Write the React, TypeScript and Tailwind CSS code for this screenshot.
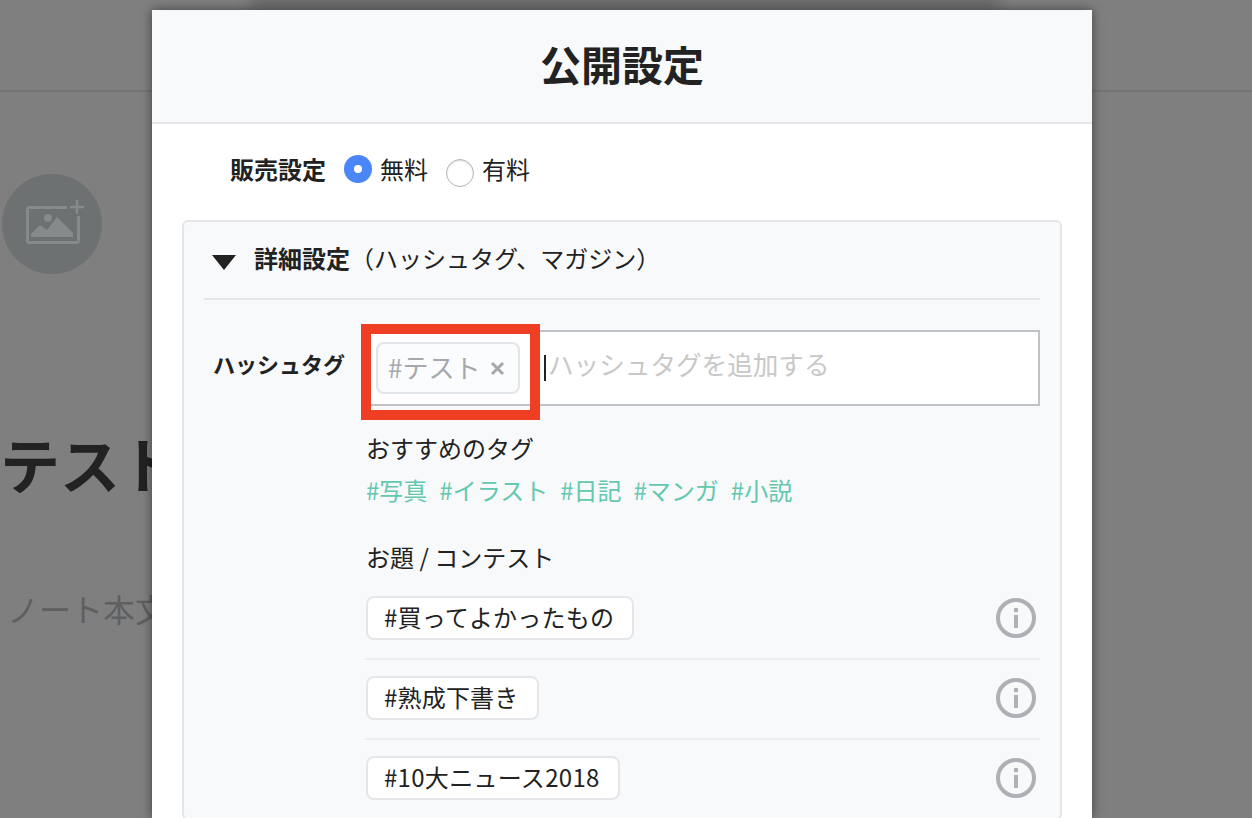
import React from "react";

const font = { fontFamily: '"Noto Sans CJK JP", "Noto Sans", sans-serif' };

function Info() {
  return (
    <svg width="40" height="40" viewBox="0 0 40 40" className="shrink-0 mr-[4px]">
      <circle cx="20" cy="20" r="18" fill="none" stroke="#adb0b4" strokeWidth="4" />
      <rect x="18" y="10" width="4" height="4" fill="#adb0b4" />
      <rect x="18" y="17" width="4" height="13" fill="#adb0b4" />
    </svg>
  );
}

function ContestRow({ label, last, track }: { label: string; last?: boolean; track: string }) {
  return (
    <div className={`flex items-center justify-between h-[80px] pb-[2px] border-b-2 ${last ? "border-transparent" : "border-[#ebedef]"}`}>
      <span className={`ml-[1px] flex items-center h-[44px] pl-[16px] pr-[18px] pb-[3px] bg-white border-2 border-[#e4e6e9] rounded-[8px] text-[24px] text-[#222] ${track}`}>
        {label}
      </span>
      <Info />
    </div>
  );
}

export default function App() {
  return (
    <div style={font} className="relative w-[1252px] h-[818px] overflow-hidden bg-[#7f7f7f]">
      <div className="flex flex-col h-[92px] border-b-2 border-[#747474]">
        <div className="ml-[250px] w-[750px] h-[4px] -mt-[4px] bg-[#555] shadow-[0_4px_14px_rgba(0,0,0,0.6)]" />
      </div>
      <div className="pt-[82px] pl-[2px]">
        <div className="flex items-center justify-center w-[100px] h-[100px] rounded-full bg-[#6d7172]">
          <svg width="58" height="44" viewBox="0 0 58 44" fill="none" className="ml-[6px] mb-[4px]">
            <path d="M41 7.5H3.5a2 2 0 0 0-2 2v31a2 2 0 0 0 2 2h47a2 2 0 0 0 2-2V16" stroke="#868a8a" strokeWidth="3" />
            <circle cx="22" cy="18" r="4" fill="#868a8a" />
            <path d="M5 37v-3l9-9 7 5 10-13 16 16v4z" fill="#868a8a" />
            <path d="M51 0v14M44 7h14" stroke="#868a8a" strokeWidth="2.5" />
          </svg>
        </div>
        <div className="mt-[147px] -ml-[2px] text-[60px] leading-[84px] font-bold text-[#222] whitespace-nowrap">テスト</div>
        <div className="mt-[81px] ml-[5px] text-[32px] leading-[44px] text-[#5f5f5f] whitespace-nowrap">ノート本文</div>
      </div>

      <div className="absolute left-[152px] top-[10px] w-[940px] h-[808px] bg-white overflow-hidden shadow-[0_0_10px_rgba(0,0,0,0.5)]">
        <div className="h-[114px] flex items-center justify-center bg-[#f7f9fb] border-b-2 border-[#e4e6e9] pb-[6px]">
          <h1 className="text-[41px] font-bold text-[#222] leading-none">公開設定</h1>
        </div>
        <div className="flex items-center h-[96px] pl-[78px] pb-[6px] text-[24px] text-[#222]">
          <span className="font-bold w-[114px]">販売設定</span>
          <span className="w-[28px] h-[28px] rounded-full bg-[#4a86f7] flex items-center justify-center">
            <span className="w-[8px] h-[8px] rounded-full bg-white" />
          </span>
          <span className="ml-[8px]">無料</span>
          <span className="ml-[18px] mt-[8px] w-[28px] h-[28px] rounded-full bg-white border border-[#b5b5b5] shadow-[inset_0_1px_2px_rgba(0,0,0,0.15)]" />
          <span className="ml-[8px]">有料</span>
        </div>
        <div className="mx-[30px] w-[880px] h-[600px] bg-[#f7f9fb] border-2 border-[#e4e6e9] rounded-[6px] px-[20px]">
          <div className="flex items-center h-[78px] pb-[4px] border-b-2 border-[#e4e6e9] text-[24px] text-[#222]">
            <svg width="24" height="15" viewBox="0 0 24 15" className="ml-[8px] mr-[18px] mt-[8px]">
              <path d="M0 0h24L12 15z" fill="#222" />
            </svg>
            <span className="font-bold">詳細設定</span>
            <span>（ハッシュタグ、マガジン）</span>
          </div>
          <div className="flex pt-[30px]">
            <div className="w-[161px] pl-[9px] pt-[15px] text-[22px] font-bold text-[#222] leading-[36px]">ハッシュタグ</div>
            <div className="w-[675px]">
              <div className="relative flex items-center h-[76px] bg-white border-2 border-[#bfc2c6] pl-[9px]">
                <span className="flex items-center h-[52px] w-[144px] pl-[10px] pb-[3px] bg-[#fbfcfd] border-2 border-[#e1e5e9] rounded-[8px] text-[26px] text-[#a6a8ab] whitespace-nowrap">
                  #テスト
                  <svg width="15" height="15" viewBox="0 0 15 15" className="ml-[10px] mt-[4px]">
                    <path d="M2 2l11 11M13 2L2 13" stroke="#a6a8ab" strokeWidth="3" />
                  </svg>
                </span>
                <span className="ml-[24px] w-[2px] h-[26px] bg-[#222]" />
                <span className="ml-[2px] text-[25.6px] text-[#c8c8c8] -mt-[8px] whitespace-nowrap">ハッシュタグを追加する</span>
                <span className="absolute left-[-6px] top-[-8px] w-[179px] h-[96px] border-[10px] border-[#ee3f25]" />
              </div>
              <div className="mt-[24px] ml-[1px] text-[24px] leading-[36px] text-[#222]">おすすめのタグ</div>
              <div className="mt-[6px] ml-[1px] flex gap-[12px] text-[24px] leading-[36px] text-[#63c8ae]">
                <span>#写真</span>
                <span>#イラスト</span>
                <span>#日記</span>
                <span>#マンガ</span>
                <span>#小説</span>
              </div>
              <div className="mt-[31px] ml-[1px] text-[24px] leading-[36px] text-[#222]">お題 / コンテスト</div>
              <div className="mt-[5px]">
                <ContestRow label="#買ってよかったもの" track="tracking-[0.2px]" />
                <ContestRow label="#熟成下書き" track="tracking-[0.2px]" />
                <ContestRow label="#10大ニュース2018" track="tracking-[0.3px]" last />
              </div>
            </div>
          </div>
        </div>
      </div>
    </div>
  );
}
